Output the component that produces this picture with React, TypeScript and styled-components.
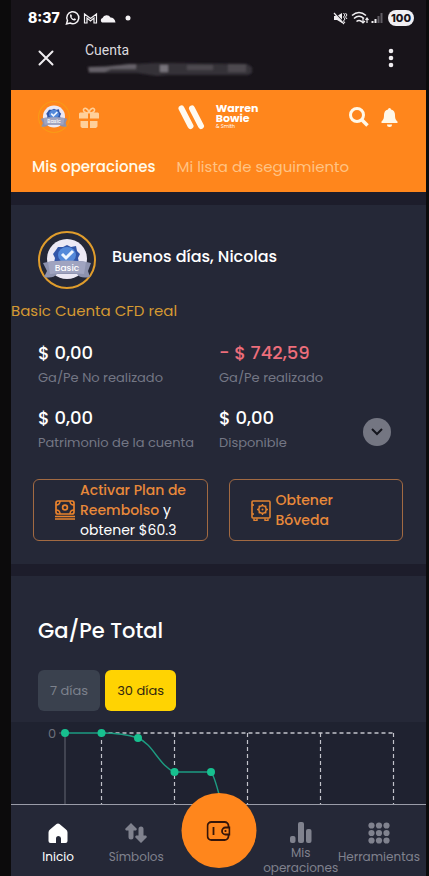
import React from 'react';
import styled, { createGlobalStyle } from 'styled-components';

const ORANGE = '#ff861c';
const FONT = '"Poppins", "Inter", "Open Sans", sans-serif';
const SYSTEM_FONT = 'Inter, Roboto, sans-serif';

const GlobalStyle = createGlobalStyle`
  * { box-sizing: border-box; }
  body { margin: 0; background: #0c0b0c; font-family: ${FONT}; color: #fff; }
  button { font: inherit; color: inherit; background: none; border: 0; padding: 0; cursor: pointer; }
  a { color: inherit; text-decoration: none; }
  svg { display: block; flex: none; }
  p, h1, h2, dl, dd, dt { margin: 0; }
`;

const Screen = styled.div`
  display: flex;
  flex-direction: column;
  min-height: 100vh;
  margin: 0 3px 0 11px;
  background: #1d1d2b;
`;

const StatusBar = styled.div`
  display: flex;
  align-items: center;
  justify-content: space-between;
  height: 35px;
  padding: 0 12px 0 17px;
  background: #18141a;
  font-family: ${SYSTEM_FONT};
`;

const StatusGroup = styled.div`
  display: flex;
  align-items: center;
  gap: 5px;
`;

const Clock = styled.time`
  font-size: 14px;
  font-weight: 800;
`;

const Battery = styled.span`
  padding: 0 3px;
  border-radius: 8px;
  background: #f1eff3;
  color: #18141a;
  font-size: 11px;
  font-weight: 800;
  line-height: 16px;
`;

const BrowserBar = styled.div`
  display: flex;
  align-items: center;
  height: 55px;
  padding: 0 29px 9px 27px;
  background: #18141a;
`;

const PageInfo = styled.div`
  display: flex;
  flex-direction: column;
  flex: 1;
  padding-left: 31px;
  font-family: Roboto, sans-serif;
  font-size: 14px;
  line-height: 22px;
  color: #dcd9de;
`;

const TopBar = styled.header`
  padding: 11px 0 12px;
  background: ${ORANGE};
`;

const TopRow = styled.div`
  display: grid;
  grid-template-columns: 1fr auto 1fr;
  align-items: center;
  height: 32px;
  padding: 0 28px 0 27px;
`;

const IconGroup = styled.div<{ $end?: boolean }>`
  display: flex;
  align-items: center;
  gap: ${(p) => (p.$end ? 12 : 9)}px;
  justify-content: ${(p) => (p.$end ? 'flex-end' : 'flex-start')};
`;

const Logo = styled.a`
  display: flex;
  align-items: center;
  gap: 11px;
`;

const LogoText = styled.span`
  display: flex;
  flex-direction: column;
  font-size: 11px;
  font-weight: 700;
  line-height: 10px;
  small { font-size: 5px; font-weight: 400; line-height: 8px; }
`;

const Tabs = styled.nav`
  display: flex;
  gap: 21px;
  margin-top: 21px;
  padding-left: 21px;
`;

const Tab = styled.button<{ $active?: boolean }>`
  font-size: 15px;
  line-height: 26px;
  font-weight: ${(p) => (p.$active ? 500 : 400)};
  color: ${(p) => (p.$active ? '#fffbea' : '#ffc384')};
  white-space: nowrap;
`;

const Card = styled.section`
  margin-top: 13px;
  padding-bottom: 23px;
  background: #252837;
`;

const Greeting = styled.div`
  display: flex;
  align-items: center;
  gap: 16px;
  padding: 26px 27px 0;
`;

const GreetingText = styled.h1`
  font-size: 16px;
  font-weight: 500;
  line-height: 24px;
  padding-bottom: 7px;
`;

const AccountType = styled.p`
  margin-top: 12px;
  font-size: 15px;
  line-height: 20px;
  color: #d59a32;
`;

const Stats = styled.dl`
  display: grid;
  grid-template-columns: 1fr 1fr;
  row-gap: 18px;
  padding: 20px 26px 0 27px;
`;

const Stat = styled.div`
  display: flex;
  flex-direction: column-reverse;
  justify-content: flex-end;
  gap: 2px;
`;

const StatWithAction = styled.div`
  display: flex;
  justify-content: space-between;
  align-items: flex-end;
  padding-right: 9px;
`;

const StatValue = styled.dd<{ $loss?: boolean }>`
  font-size: 18px;
  font-weight: 500;
  line-height: 24px;
  color: ${(p) => (p.$loss ? '#ed6e7b' : '#fff')};
`;

const StatLabel = styled.dt`
  font-size: 13px;
  line-height: 21px;
  color: #747785;
  white-space: nowrap;
`;

const Expand = styled.button`
  display: grid;
  place-items: center;
  width: 28px;
  height: 28px;
  margin-bottom: 7px;
  border-radius: 50%;
  background: #747682;
`;

const Offers = styled.div`
  display: grid;
  grid-template-columns: 1fr 1fr;
  gap: 21px;
  margin: 26px 23px 0 22px;
`;

const Offer = styled.button`
  display: flex;
  align-items: center;
  gap: 5px;
  min-height: 61px;
  padding: 0 8px 0 21px;
  border: 1px solid #a26a42;
  border-radius: 6px;
  text-align: left;
  font-size: 14px;
  line-height: 20px;
  white-space: nowrap;
`;

const OfferText = styled.span`
  display: flex;
  flex-direction: column;
`;

const Accent = styled.span`
  color: #e8893a;
  font-weight: 500;
`;

const ChartCard = styled.section`
  margin-top: 12px;
  padding: 40px 27px 11px;
  background: #252837;
`;

const ChartTitle = styled.h2`
  font-size: 21px;
  font-weight: 500;
  line-height: 30px;
`;

const Periods = styled.div`
  display: flex;
  gap: 5px;
  margin-top: 24px;
`;

const Period = styled.button<{ $active?: boolean }>`
  height: 41px;
  padding: 0 12px;
  border-radius: 6px;
  font-size: 13px;
  background: ${(p) => (p.$active ? '#ffd302' : '#3a414e')};
  color: ${(p) => (p.$active ? '#332710' : '#7d828d')};
`;

const ChartArea = styled.div`
  height: 82px;
  overflow: hidden;
  background: #1f2230;
  svg { width: 100%; height: auto; }
  text { font-family: ${FONT}; font-size: 13px; }
`;

const BottomNav = styled.nav`
  position: relative;
  display: grid;
  grid-template-columns: repeat(2, minmax(0, 39fr)) minmax(0, 43fr) repeat(2, minmax(0, 39fr));
  flex: 1;
  height: 72px;
  padding: 0 8px;
  border-top: 1px solid #9a9ca8;
  background: #252837;
`;

const NavItem = styled.a<{ $active?: boolean }>`
  display: flex;
  flex-direction: column;
  align-items: center;
  padding-top: 17px;
  color: ${(p) => (p.$active ? '#fff' : '#80828e')};
`;

const NavLabel = styled.span<{ $double?: boolean }>`
  font-size: 12px;
  line-height: ${(p) => (p.$double ? 15 : 24)}px;
  padding-top: 1px;
  text-align: center;
  white-space: nowrap;
`;

const WalletButton = styled.button`
  position: absolute;
  left: 50%;
  top: -12px;
  display: grid;
  place-items: center;
  width: 75px;
  height: 75px;
  transform: translateX(-50%);
  border-radius: 50%;
  background: ${ORANGE};
`;

function Badge({ size, ring }: { size: number; ring: string }) {
  return (
    <svg width={size} height={size} viewBox="0 0 58 58" role="img" aria-label="Basic">
      <circle cx="29" cy="29" r="28" fill="none" stroke={ring} strokeWidth="2" />
      <circle cx="29" cy="28" r="20" fill="#ece9f5" />
      <path d="M29 14l4 2 5-1 1 5 3 3-2 4 1 5-4 2H20l-4-2 1-5-2-4 3-4 2-3 5 0z" fill="#3155a8" />
      <ellipse cx="29" cy="24" rx="9" ry="8" fill="#5489da" />
      <path d="M24 23l4 4 7-7" fill="none" stroke="#eff5ff" strokeWidth="3" />
      <path d="M5 32q10-3 24-2 14-1 24 2l-3 8 2 6q-10 2-13-3H19q-4 5-13 3l3-6z" fill="#8d92ae" />
      <path d="M10 31q19-3 38 0l-2 12q-17-2-34 0z" fill="#a0a4c0" />
      <text x="29" y="40" textAnchor="middle" fontFamily={FONT} fontSize="9" fontWeight="500" fill="#fff">Basic</text>
    </svg>
  );
}

const GiftIcon = () => (
  <svg width="20" height="21" viewBox="0 0 20 21" fill="#ffd09a">
    <path d="M1 5.500h8v6H0v-5zM11 5.500h8l1 1v5h-9zM1.500 14H9v7H3l-1.500-1.500zM11 14h7.500v5.500L17 21h-6z" />
    <path d="M9.500 6C6 6 4 4.500 4.500 2.500S9 .5 10 6C11 .5 15 .5 15.500 2.500S14 6 10.500 6" fill="none" stroke="#ffd09a" strokeWidth="1.600" />
  </svg>
);

const StatusIcons = () => (
  <svg width="66" height="16" viewBox="0 0 66 16" fill="none" stroke="#f4f2f5" strokeWidth="1.500">
    <path d="M1.500 14l1-3.500A6 6 0 1 1 5 13z" />
    <path d="M5 5.200c.2-1.200 1.400-1 1.700 0l.3 1-.6.8c.5 1 1.200 1.600 2.200 2l.8-.7 1.500.8c.4 1.300-1.400 1.800-2.500 1.200C6.700 9.600 5 8 5 5.200z" fill="#f4f2f5" stroke="none" />
    <path d="M19.500 13V4l6 4.500 6-4.500v9h-2.500V8l-3.500 3L22 8v5z" strokeWidth="1.200" />
    <path d="M37 12.500a2.500 2.500 0 0 1 .5-4.500 4.500 4.500 0 0 1 8-.5c2.500 0 4.500 1.500 5 5z" fill="#f4f2f5" stroke="none" />
    <circle cx="63" cy="8" r="2.500" fill="#f4f2f5" stroke="none" />
  </svg>
);

const SignalIcons = () => (
  <svg width="50" height="16" viewBox="0 0 50 16" fill="none" stroke="#f0eef1" strokeWidth="1.600">
    <path d="M1 6h3l5-3v10L4 10H1z" fill="#f0eef1" stroke="none" />
    <path d="M1 2l10 11" stroke="#18141a" strokeWidth="1.500" />
    <path d="M1 3l10 11" strokeWidth="1.200" />
    <path d="M10.500 3l1.500 2-1.500 2L12 9l-1.500 2 1.500 2M12.500 3L14 5l-1.500 2L14 9" strokeWidth="1" />
    <path d="M19 5.500q7-6 14 0M21 8.500q5-4.500 10 0M23.500 11.500q2.500-2 5 0" />
    <path d="M30 8v5m-2-2l2 2 2-2M34 13V8m-1.500 2L34 8l1.500 2" strokeWidth="1.200" />
    <path d="M39.500 13v-2M42.500 13V9" strokeWidth="2" />
    <path d="M45.500 13V6M48.500 13V3" stroke="#615d64" strokeWidth="2" />
  </svg>
);

const RedactedAddress = () => (
  <svg width="170" height="16" viewBox="0 0 170 16" aria-hidden="true">
    <defs><filter id="soft"><feGaussianBlur stdDeviation="1.200" /></filter></defs>
    <g filter="url(#soft)">
      <path d="M2 6l48-3 20-1h16l76 1 5 3v6l-4 2H84l-12 1-20-3H4z" fill="#363238" />
      <path d="M4 6h16l24-3h7v5H26l-6 3H4z" fill="#656167" />
      <path d="M75 4h8v7h-8z" fill="#77737a" />
      <path d="M102 4h26v5h-26zM143 3h18v8h-18z" fill="#4e4a50" />
    </g>
  </svg>
);

const CashIcon = () => (
  <svg width="20" height="20" viewBox="0 0 20 20" fill="none" stroke="#e8822d" strokeWidth="1.700">
    <rect x="1" y="1" width="18" height="13" rx="2" />
    <circle cx="10" cy="7.500" r="2.400" />
    <path d="M1 5q4 0 4-4M19 5q-4 0-4-4M1 10q4 0 4 4M19 10q-4 0-4 4M0 16.500h20M0 19h20" strokeWidth="1.500" />
  </svg>
);

const VaultIcon = () => (
  <svg width="20" height="21" viewBox="0 0 20 21" fill="none" stroke="#e08232" strokeWidth="1.600">
    <rect x="1" y="1" width="18" height="17" rx="1" />
    <circle cx="11.500" cy="9.500" r="3.700" />
    <circle cx="11.500" cy="9.500" r="1" fill="#e08232" stroke="none" />
    <path d="M11.500 4v2M11.500 13v2M6 9.500h2M15 9.500h2M7.700 5.700l1.400 1.400M15.300 5.700l-1.400 1.400M7.700 13.300l1.400-1.400M15.300 13.300l-1.400-1.400M1 5h2M1 14h2M3 18.500v2h3v-2M14 18.500v2h3v-2" strokeWidth="1.400" />
  </svg>
);

const navIcons = {
  home: <path d="M11 1.500q.8 0 1.500.6L19 7.500q1.500 1.200 1.500 3V19q0 2-2 2H14v-4.500a2.500 2.500 0 0 0-5 0V21H3.500q-2 0-2-2v-8.500q0-1.800 1.500-3l6.500-5.400q.7-.6 1.500-.6z" />,
  swap: <path d="M6 1l6 6-1 1.500H8.500V15a2 2 0 0 1-5 0V8.500H1L0 7zM16 21l-6-6 1-1.500h2.500V7a2 2 0 0 1 5 0v6.500H21l1 1.500z" />,
  bars: (
    <>
      <rect x="0" y="14" width="5.500" height="7" rx="2" />
      <rect x="8" y="0" width="6" height="21" rx="2" />
      <rect x="16" y="7" width="5.500" height="14" rx="2" />
    </>
  ),
  dots: (
    <>
      {[3.5, 11, 18.5].flatMap((y) => [3.5, 11, 18.5].map((x) => <circle key={`${x}-${y}`} cx={x} cy={y} r="3.100" />))}
    </>
  ),
};

const NavIcon = ({ name }: { name: keyof typeof navIcons }) => (
  <svg width="22" height="22" viewBox="0 0 22 22" fill="currentColor">{navIcons[name]}</svg>
);

const points = [[54, 11], [90.5, 11], [127, 16], [163.5, 50], [200, 50]];
const gridLines = [90.5, 163.5, 236.5, 309.5, 382.5];

function ProfitChart() {
  return (
    <ChartArea>
      <svg viewBox="0 0 415 82" role="img" aria-label="Ga/Pe Total">
        <text x="37" y="16" fill="#6d707c">0</text>
        <path d="M48 11h6v71" fill="none" stroke="#646773" />
        <path d="M90.500 11h292" stroke="#c2c3ca" strokeWidth="1.300" strokeDasharray="4 3" />
        {gridLines.map((x) => (
          <path key={x} d={`M${x} 11v71`} stroke="#c2c3ca" strokeWidth="1.200" strokeDasharray="4 3" />
        ))}
        <path d="M54 11H90.500C104 11 115 12 127 16C142 22 149 45 163.500 50H200Q203 53 209 76" fill="none" stroke="#1d9c81" strokeWidth="1.400" />
        {points.map(([x, y]) => <circle key={x} cx={x} cy={y} r="4" fill="#17c08f" />)}
      </svg>
    </ChartArea>
  );
}

export default function App() {
  return (
    <>
      <GlobalStyle />
      <Screen>
        <StatusBar>
          <StatusGroup>
            <Clock>8:37</Clock>
            <StatusIcons />
          </StatusGroup>
          <StatusGroup>
            <SignalIcons />
            <Battery>100</Battery>
          </StatusGroup>
        </StatusBar>
        <BrowserBar>
          <button aria-label="Cerrar">
            <svg width="16" height="16" viewBox="0 0 16 16" stroke="#efedf0" strokeWidth="2" strokeLinecap="round"><path d="M1.500 1.500l13 13M14.500 1.500l-13 13" /></svg>
          </button>
          <PageInfo>
            Cuenta
            <RedactedAddress />
          </PageInfo>
          <button aria-label="Más opciones">
            <svg width="12" height="20" viewBox="0 0 12 20" fill="#efedf0"><circle cx="6" cy="3" r="2.300" /><circle cx="6" cy="10" r="2.300" /><circle cx="6" cy="17" r="2.300" /></svg>
          </button>
        </BrowserBar>

        <TopBar>
          <TopRow>
            <IconGroup>
              <Badge size={32} ring="#f99a17" />
              <GiftIcon />
            </IconGroup>
            <Logo href="#" aria-label="Warren Bowie">
              <svg width="27" height="25" viewBox="0 0 27 25" stroke="#fffaf0" strokeWidth="6" strokeLinecap="round"><path d="M3.500 3.500l9 17.500M14 3.500L23 21" /></svg>
              <LogoText>
                <span>Warren</span>
                <span>Bowie</span>
                <small>&amp; Smith</small>
              </LogoText>
            </Logo>
            <IconGroup $end>
              <button aria-label="Buscar">
                <svg width="20" height="20" viewBox="0 0 20 20" fill="none" stroke="#fff8e8" strokeWidth="3"><circle cx="8" cy="8" r="6.500" /><path d="M13 13l5.500 5.500" strokeWidth="3.500" /></svg>
              </button>
              <button aria-label="Notificaciones">
                <svg width="17" height="19" viewBox="0 0 17 19" fill="#fff8e8"><path d="M8.500 0a1.500 1.500 0 0 1 1.500 1.500C13 2 14 4.500 14 7c0 4 1 5 2.500 6.500V15H.5v-1.500C2 12 3 11 3 7c0-2.500 1-5 4-5.500A1.500 1.500 0 0 1 8.500 0zM6 16.500h5a2.500 2.500 0 0 1-5 0z" /></svg>
              </button>
            </IconGroup>
          </TopRow>
          <Tabs>
            <Tab $active>Mis operaciones</Tab>
            <Tab>Mi lista de seguimiento</Tab>
          </Tabs>
        </TopBar>

        <Card>
          <Greeting>
            <Badge size={58} ring="#e09d2c" />
            <GreetingText>Buenos días, Nicolas</GreetingText>
          </Greeting>
          <AccountType>Basic Cuenta CFD real</AccountType>
          <Stats>
            <Stat><StatLabel>Ga/Pe No realizado</StatLabel><StatValue>$ 0,00</StatValue></Stat>
            <Stat><StatLabel>Ga/Pe realizado</StatLabel><StatValue $loss>- $ 742,59</StatValue></Stat>
            <Stat><StatLabel>Patrimonio de la cuenta</StatLabel><StatValue>$ 0,00</StatValue></Stat>
            <StatWithAction>
              <Stat as="span"><StatLabel as="span">Disponible</StatLabel><StatValue as="span">$ 0,00</StatValue></Stat>
              <Expand aria-label="Mostrar más">
                <svg width="12" height="8" viewBox="0 0 12 8" fill="none" stroke="#15161e" strokeWidth="2"><path d="M1 1l5 5 5-5" /></svg>
              </Expand>
            </StatWithAction>
          </Stats>
          <Offers>
            <Offer>
              <CashIcon />
              <OfferText>
                <Accent>Activar Plan de</Accent>
                <span><Accent>Reembolso</Accent> y</span>
                <span>obtener $60.3</span>
              </OfferText>
            </Offer>
            <Offer>
              <VaultIcon />
              <OfferText>
                <Accent>Obtener</Accent>
                <Accent>Bóveda</Accent>
              </OfferText>
            </Offer>
          </Offers>
        </Card>

        <ChartCard>
          <ChartTitle>Ga/Pe Total</ChartTitle>
          <Periods>
            <Period>7 días</Period>
            <Period $active>30 días</Period>
          </Periods>
        </ChartCard>
        <ProfitChart />

        <BottomNav>
          <NavItem href="#" $active><NavIcon name="home" /><NavLabel>Inicio</NavLabel></NavItem>
          <NavItem href="#"><NavIcon name="swap" /><NavLabel>Símbolos</NavLabel></NavItem>
          <span />
          <NavItem href="#"><NavIcon name="bars" /><NavLabel $double>Mis<br />operaciones</NavLabel></NavItem>
          <NavItem href="#"><NavIcon name="dots" /><NavLabel>Herramientas</NavLabel></NavItem>
          <WalletButton aria-label="Cartera">
            <svg width="24" height="20" viewBox="0 0 24 20" fill="none" stroke="#35150a" strokeWidth="1.800">
              <path d="M22 6V5a4 4 0 0 0-4-4H5a4 4 0 0 0-4 4v10a4 4 0 0 0 4 4h13a4 4 0 0 0 4-4v-1" />
              <path d="M23 6.500h-4a3.500 3.500 0 0 0 0 7h4zM7 6v8" />
              <circle cx="19" cy="10" r="1.100" fill="#35150a" stroke="none" />
            </svg>
          </WalletButton>
        </BottomNav>
      </Screen>
    </>
  );
}
